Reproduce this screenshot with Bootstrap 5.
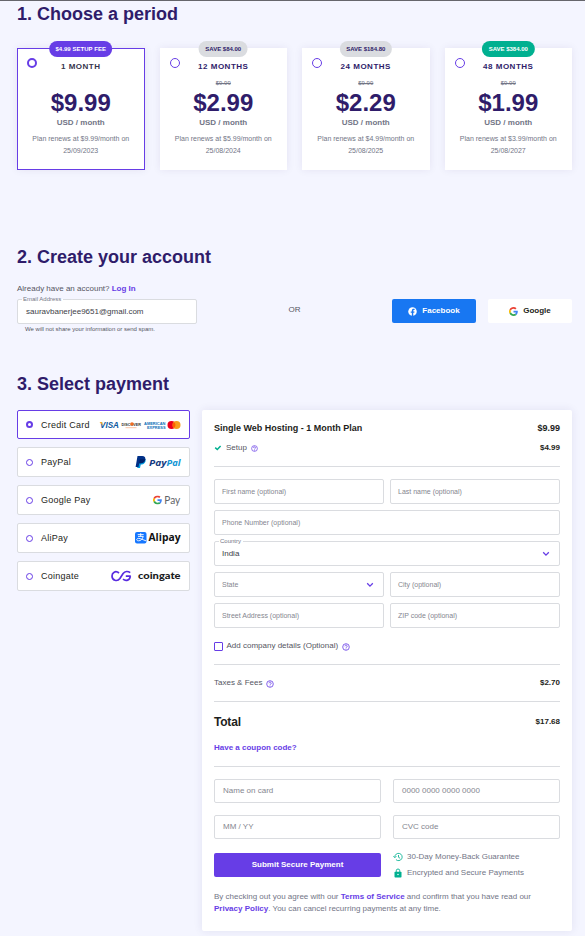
<!DOCTYPE html>
<html lang="en">
<head>
<meta charset="utf-8">
<meta name="viewport" content="width=device-width, initial-scale=1">
<title>Checkout</title>
<link href="https://cdn.jsdelivr.net/npm/bootstrap@5.3.0/dist/css/bootstrap.min.css" rel="stylesheet">
<style>
:root{--violet:#673de6;--ink:#2f1c6a;--line:#dadce0;--muted:#727586;--green:#00b090}
body{font:8px/12px "Liberation Sans",Arial,sans-serif;background:#f4f5ff;color:#55565f;border-top:1px solid #66666c;height:936px;overflow:hidden}
.page{padding:0 13px 0 17px}
svg{display:block;flex:none}
h2{font-size:18px;line-height:26px;font-weight:700;color:var(--ink);margin:0}
a{color:var(--violet);font-weight:700;text-decoration:none}
.plans{--bs-gutter-x:15px;margin-top:21px;margin-bottom:74px}
.plan{height:122px;background:#fff;box-shadow:0 0 8px rgba(47,28,106,.08);padding-top:13px}
.plan.chosen{border:1px solid var(--violet);padding-top:12px}
.tag{top:-7px;left:50%;transform:translateX(-50%);height:16px;line-height:16px;padding:0 6.5px;border-radius:8px;font-size:6px;font-weight:700;background:var(--line);color:var(--ink);white-space:nowrap}
.tag.fee{top:-8px;background:var(--violet);color:#fff;letter-spacing:.05px}
.tag.best{background:var(--green);color:#fff}
.radio{width:10px;height:10px;border:1px solid var(--violet);border-radius:50%;flex:none;background:#fff}
.plan .radio{left:10px;top:10px}
.plan.chosen .radio{left:9px;top:9px;border-width:2px}
.term{font-weight:700;color:#36344d;letter-spacing:.5px;height:12px}
.plan:not(.chosen) .term{color:var(--ink)}
.was{font-size:6px;height:12px;margin-top:4px;color:var(--muted);text-decoration:line-through}
.price{font-size:24px;line-height:28px;font-weight:700;color:var(--ink)}
.per{font-weight:700;color:var(--muted);line-height:11px}
.renew{font-size:7px;color:var(--muted);margin-top:5px}
.login-line{margin-top:13px;margin-bottom:4px}
.account{height:37px;margin-bottom:35px}
.email{width:180px}
.hint{font-size:6px;line-height:10px;padding-left:8px}
.either{padding-top:5px}
.socials{gap:12px}
.field{z-index:0;border:1px solid var(--line);border-radius:2px;background:#fff;height:25px;padding:0 7px;color:#85868f;font-size:7px}
.field.big{height:24px;padding:0 8px;font-size:8px}
.field.filled{font-size:8px;color:#3d3e48}
.email .field{padding-left:8px}
.field.select{padding-right:9px}
.cap{top:-6px;left:3.5px;font-size:6px;line-height:10px;padding:0 1.5px;color:#727586}
.cap::before{content:"";position:absolute;z-index:-1;left:0;right:0;top:5px;height:2px;background:#fff}
.social{width:84px;height:24px;border-radius:2px;font-weight:700;gap:5px;color:#1d1e20;background:#fff}
.social svg{margin-top:1px}
.social.fb{background:#1877f2;color:#fff}
.checkout{margin-top:13px;gap:12px}
.methods{width:173px;gap:8px}
.method{height:30px;border:1px solid var(--line);border-radius:2px;background:#fff;padding:0 8px;font-size:9px;letter-spacing:.25px;color:#1d1e20}
.method svg{letter-spacing:0;overflow:visible}
.method.chosen{height:29px;border-color:var(--violet)}
.method .radio{width:7px;height:7px;margin-right:8px}
.method.chosen .radio{border-width:2px}
.summary{width:370px;height:521px;background:#fff;border-radius:2px;box-shadow:0 0 10px rgba(47,28,106,.09);padding:12px 12px 0}
.strong{font-weight:700;color:#1d1e20}
.product{font-size:9px;margin-bottom:8px}
.line{height:12px}
.rule{height:1px;background:var(--line);margin:12px 0}
.pair{display:grid;grid-template-columns:1fr 1fr;gap:6px;margin-bottom:12px}
.pair.card-data,.pair.submit{gap:12px;margin-bottom:14px}
.wide{grid-column:1/-1}
.tick{margin-right:4px}
.help{margin:1px 0 0 4px}
.box{width:9px;height:9px;border:1px solid var(--violet);border-radius:1px;margin:1px 3.5px 0 0}
.sum{height:16px;margin-bottom:12px}
.sum-label{font-size:12px;letter-spacing:-.2px}
.pay{height:24px;border-radius:2px;background:var(--violet);color:#fff;font-weight:700}
.soft{color:#727586}
.promises{height:26px;gap:4px;margin-top:-2px}
.promises svg{margin:0 4px 0 0}
</style>
</head>
<body>
<svg width="0" height="0" class="position-absolute">
  <symbol id="help" viewBox="0 0 16 16"><g fill="none" stroke="#673de6" stroke-width="1.6"><circle cx="8" cy="8" r="6.6"/><path d="M5.700 6.500a2.300 2.200 0 1 1 3.600 1.800C8.400 9 8 9.300 8 10.200M8 11.400v1.500"/></g></symbol>
  <symbol id="g" viewBox="0 0 48 48"><path fill="#ea4335" d="M24 9.500c3.500 0 6.700 1.200 9.200 3.600l6.900-6.900C35.900 2.400 30.500 0 24 0 14.600 0 6.500 5.400 2.600 13.200l8 6.200C12.400 13.700 17.700 9.500 24 9.500z"/><path fill="#4285f4" d="M47 24.600c0-1.600-.2-3.100-.4-4.600H24v9h12.900c-.6 3-2.300 5.500-4.800 7.200l7.700 6C44.400 38 47 31.800 47 24.600z"/><path fill="#fbbc05" d="M10.500 28.600a14.500 14.500 0 0 1 0-9.200l-8-6.200a24 24 0 0 0 0 21.600l8-6.200z"/><path fill="#34a853" d="M24 48c6.500 0 11.900-2.100 15.900-5.800l-7.700-6c-2.200 1.500-4.900 2.300-8.200 2.300-6.300 0-11.600-4.200-13.500-9.900l-8 6.200C6.500 42.600 14.600 48 24 48z"/></symbol>
  <symbol id="down" viewBox="0 0 8 6"><path d="M1.200 1.300 4 4.100l2.800-2.800" fill="none" stroke="#673de6" stroke-width="1.300"/></symbol>
</svg>
<main class="page">
  <h2>1. Choose a period</h2>
  <div class="row plans text-center">
    <div class="col-3"><div class="plan chosen position-relative"><span class="tag fee position-absolute">$4.99 SETUP FEE</span><span class="radio position-absolute"></span>
      <div class="term">1 MONTH</div><div class="was"></div><div class="price">$9.99</div><div class="per">USD / month</div><div class="renew">Plan renews at $9.99/month on<br>25/09/2023</div></div></div>
    <div class="col-3"><div class="plan position-relative"><span class="tag position-absolute">SAVE $84.00</span><span class="radio position-absolute"></span>
      <div class="term">12 MONTHS</div><div class="was">$9.99</div><div class="price">$2.99</div><div class="per">USD / month</div><div class="renew">Plan renews at $5.99/month on<br>25/08/2024</div></div></div>
    <div class="col-3"><div class="plan position-relative"><span class="tag position-absolute">SAVE $184.80</span><span class="radio position-absolute"></span>
      <div class="term">24 MONTHS</div><div class="was">$9.99</div><div class="price">$2.29</div><div class="per">USD / month</div><div class="renew">Plan renews at $4.99/month on<br>25/08/2025</div></div></div>
    <div class="col-3"><div class="plan position-relative"><span class="tag best position-absolute">SAVE $384.00</span><span class="radio position-absolute"></span>
      <div class="term">48 MONTHS</div><div class="was">$9.99</div><div class="price">$1.99</div><div class="per">USD / month</div><div class="renew">Plan renews at $3.99/month on<br>25/08/2027</div></div></div>
  </div>

  <h2>2. Create your account</h2>
  <div class="login-line">Already have an account? <a href="#">Log In</a></div>
  <div class="account d-flex">
    <div class="email">
      <div class="field filled position-relative d-flex align-items-center"><span class="cap position-absolute">Email Address</span>sauravbanerjee9651@gmail.com</div>
      <div class="hint">We will not share your information or send spam.</div>
    </div>
    <div class="either flex-fill text-center">OR</div>
    <div class="socials d-flex">
      <div class="social fb d-flex align-items-center justify-content-center"><svg width="9" height="9" viewBox="0 0 18 18"><circle cx="9" cy="9" r="8.500" fill="#fff"/><path fill="#1877f2" d="M7.700 18v-6.300H5.400V9.100h2.300v-2c0-2.300 1.400-3.600 3.500-3.600.7 0 1.500.1 2 .2v2.200H12c-1.100 0-1.500.7-1.500 1.400v1.800H13l-.4 2.600h-2.100V18z"/></svg>Facebook</div>
      <div class="social d-flex align-items-center justify-content-center"><svg width="9" height="9"><use href="#g"/></svg>Google</div>
    </div>
  </div>

  <h2>3. Select payment</h2>
  <div class="checkout d-flex">
    <div class="methods d-flex flex-column">
      <div class="method chosen d-flex align-items-center"><span class="radio"></span>Credit Card
        <svg class="ms-auto" width="83" height="10" viewBox="0 0 83 10">
          <g font-family="Liberation Sans, sans-serif" font-weight="700">
          <text x="2" y="8" font-size="8.500" font-style="italic" fill="#0e5aa0" textLength="19" lengthAdjust="spacingAndGlyphs">VISA</text><path d="M1.500 2h2.500l1 3.500z" fill="#f7a823"/>
          <text x="23.500" y="5.500" font-size="4.200" fill="#333" textLength="19.500" lengthAdjust="spacingAndGlyphs">DISCOVER</text><circle cx="34" cy="4" r="1.800" fill="#f26b21"/>
          <path d="M27.500 7.700h11" stroke="#f8b48c" stroke-width=".8"/>
          <text x="46" y="4.900" font-size="4.200" fill="#0d70b7" textLength="21.500" lengthAdjust="spacingAndGlyphs">AMERICAN</text><text x="49" y="8.500" font-size="4.200" fill="#0d70b7" textLength="18.500" lengthAdjust="spacingAndGlyphs">EXPRESS</text></g>
          <circle cx="73.500" cy="5" r="4" fill="#eb001b"/><circle cx="78.500" cy="5" r="4" fill="#f79e1b"/><path d="M76 1.900a4 4 0 0 1 0 6.200 4 4 0 0 1 0-6.200z" fill="#ff5f00"/>
        </svg></div>
      <div class="method d-flex align-items-center"><span class="radio"></span>PayPal
        <svg class="ms-auto" width="46" height="14" viewBox="0 0 46 14"><path fill="#009cde" d="M4.300 4h6.300c.4 3.600-1.500 5.500-4.800 5.500L5 13H2.200z"/><path fill="#003087" d="M2.500 1h4.700c2.400 0 3.500 1.300 3.100 3.500C9.800 7 8.100 8.200 5.600 8.200H4.300L3.500 12H.6z"/><path fill="#012169" d="M4.900 4.300h5.400C9.800 7 8.100 8.200 5.600 8.200H4.200z"/>
          <g font-family="Open Sans, sans-serif" font-weight="700" font-style="italic" font-size="9.500"><text x="14" y="10.500" fill="#153a80" textLength="17.500" lengthAdjust="spacingAndGlyphs">Pay</text><text x="31.500" y="10.500" fill="#1195d4" textLength="14" lengthAdjust="spacingAndGlyphs">Pal</text></g></svg></div>
      <div class="method d-flex align-items-center"><span class="radio"></span>Google Pay
        <svg class="ms-auto" width="28" height="14" viewBox="0 0 28 14"><use href="#g" x="0" y="2.500" width="9" height="9"/><text x="11.300" y="11" font-family="Lato, sans-serif" font-size="10.500" fill="#5f6368" textLength="16" lengthAdjust="spacingAndGlyphs">Pay</text></svg></div>
      <div class="method d-flex align-items-center"><span class="radio"></span>AliPay
        <svg class="ms-auto" width="47" height="14" viewBox="0 0 47 14"><rect x="1" y="1" width="11.500" height="11.500" rx="2" fill="#1677ff"/><path d="M3.700 3.600h6M6.700 2.200v3.200M4 5.400h5.300C8.300 8.500 6.600 9.800 4.500 9.800c-2.500 0-2.300-2.500.2-2.400 2.300.1 4 1.300 7.500 2.500" fill="none" stroke="#fff" stroke-width=".9"/><text x="14.500" y="10.300" font-family="Open Sans, sans-serif" font-weight="700" font-size="10.500" fill="#111" textLength="32" lengthAdjust="spacingAndGlyphs">Alipay</text></svg></div>
      <div class="method d-flex align-items-center"><span class="radio"></span>Coingate
        <svg class="ms-auto" width="71" height="14" viewBox="0 0 71 14"><path d="M9 4C5.500 1 2 3.700 2 7c0 4.600 5.400 6 7.900 2.500l3.200-5C15 2 18 2 20.200 3.700M20.800 7.200h-5M20.300 7.200c-.3 3.900-4.300 5.500-7.300 3" fill="none" stroke="#582be0" stroke-width="1.700"/><text x="28" y="10" font-family="Lato, sans-serif" font-weight="900" font-size="9.500" fill="#1b1c22" textLength="42.500" lengthAdjust="spacingAndGlyphs">coingate</text></svg></div>
    </div>

    <div class="summary">
      <div class="product strong d-flex justify-content-between"><span>Single Web Hosting - 1 Month Plan</span><span>$9.99</span></div>
      <div class="line d-flex align-items-center"><svg class="tick" width="8" height="6" viewBox="0 0 8 6"><path d="M1.200 2.600 3.300 4.500 6.600 1" fill="none" stroke="#00b090" stroke-width="1.500"/></svg>Setup<svg class="help" width="7" height="7"><use href="#help"/></svg><span class="strong ms-auto">$4.99</span></div>
      <div class="rule"></div>
      <div class="pair">
        <div class="field d-flex align-items-center">First name (optional)</div>
        <div class="field d-flex align-items-center">Last name (optional)</div>
        <div class="field wide d-flex align-items-center">Phone Number (optional)</div>
        <div class="field filled select wide position-relative d-flex align-items-center justify-content-between"><span class="cap position-absolute">Country</span>India<svg width="8" height="6"><use href="#down"/></svg></div>
        <div class="field select d-flex align-items-center justify-content-between">State<svg width="8" height="6"><use href="#down"/></svg></div>
        <div class="field d-flex align-items-center">City (optional)</div>
        <div class="field d-flex align-items-center">Street Address (optional)</div>
        <div class="field d-flex align-items-center">ZIP code (optional)</div>
      </div>
      <div class="line d-flex align-items-center"><span class="box"></span>Add company details (Optional)<svg class="help" width="8" height="8"><use href="#help"/></svg></div>
      <div class="rule"></div>
      <div class="line d-flex align-items-center">Taxes &amp; Fees<svg class="help" width="8" height="8"><use href="#help"/></svg><span class="strong ms-auto">$2.70</span></div>
      <div class="rule"></div>
      <div class="sum strong d-flex align-items-center justify-content-between"><span class="sum-label">Total</span><span>$17.68</span></div>
      <div><a href="#">Have a coupon code?</a></div>
      <div class="rule"></div>
      <div class="pair card-data">
        <div class="field big d-flex align-items-center">Name on card</div>
        <div class="field big d-flex align-items-center">0000 0000 0000 0000</div>
        <div class="field big d-flex align-items-center">MM / YY</div>
        <div class="field big d-flex align-items-center">CVC code</div>
      </div>
      <div class="pair submit">
        <div class="pay d-flex align-items-center justify-content-center">Submit Secure Payment</div>
        <div class="promises soft d-flex flex-column">
          <div class="d-flex align-items-center"><svg width="10" height="10" viewBox="0 0 20 20"><path d="M3.700 10a7.300 7.300 0 1 1 2.200 5.200M.8 8.500l2.900 3 3-3M11 6v4.500l3.200 2" fill="none" stroke="#00b090" stroke-width="1.700"/></svg>30-Day Money-Back Guarantee</div>
          <div class="d-flex align-items-center"><svg width="10" height="10" viewBox="0 0 20 20"><path d="M6.500 8V5.500a3.500 3.500 0 0 1 7 0V8" fill="none" stroke="#00b090" stroke-width="1.800"/><rect x="3" y="7.500" width="14" height="11.500" rx="1.500" fill="#00b090"/><circle cx="10" cy="13.200" r="1.500" fill="#fff"/></svg>Encrypted and Secure Payments</div>
        </div>
      </div>
      <div class="soft">By checking out you agree with our <a href="#">Terms of Service</a> and confirm that you have read our <a href="#">Privacy Policy</a>. You can cancel recurring payments at any time.</div>
    </div>
  </div>
</main>
<script src="https://cdn.jsdelivr.net/npm/bootstrap@5.3.0/dist/js/bootstrap.bundle.min.js"></script>
</body>
</html>
